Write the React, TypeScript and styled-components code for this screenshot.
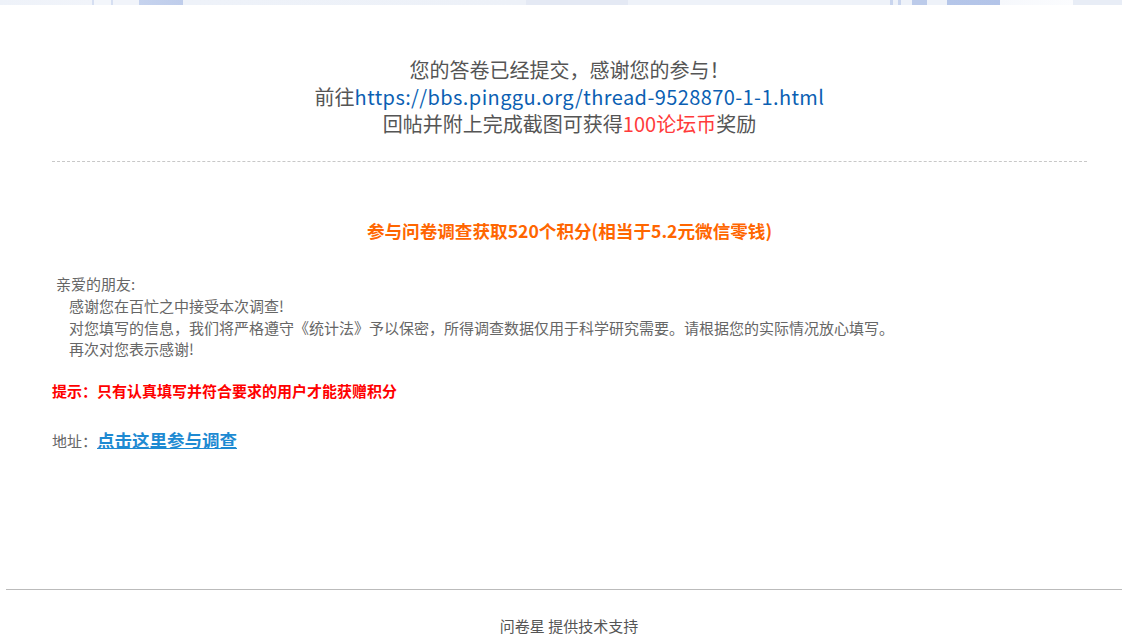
import styled, { createGlobalStyle } from "styled-components";

const GlobalStyle = createGlobalStyle`
  html, body {
    margin: 0;
    padding: 0;
    background: #fff;
  }
  body {
    font-family: "Microsoft YaHei", "Noto Sans CJK SC", "Noto Sans", sans-serif;
    color: #666;
  }
`;

const Banner = styled.div`
  height: 5px;
  background: linear-gradient(
    to right,
    #eef2f9 0px,
    #f1f4fa 92px,
    #d6dff2 92px,
    #d6dff2 94px,
    #f3f6fb 94px,
    #f3f6fb 111px,
    #d6dff2 111px,
    #d6dff2 113px,
    #f1f4fa 113px,
    #f1f4fa 139px,
    #c6d3ee 139px,
    #bfcdeb 183px,
    #eef2f9 183px,
    #edf1f8 526px,
    #e4e9f4 526px,
    #e4e9f4 628px,
    #eef2f9 628px,
    #eef2f9 890px,
    #c9d5ee 890px,
    #c9d5ee 893px,
    #eef2f9 893px,
    #eef2f9 898px,
    #c9d5ee 898px,
    #c9d5ee 901px,
    #eef2f9 901px,
    #eef2f9 912px,
    #bccbea 912px,
    #bccbea 927px,
    #eef2f9 927px,
    #eef2f9 947px,
    #b5c6e9 947px,
    #b3c4e8 1000px,
    #f6f8fc 1000px,
    #fbfcfe 1073px,
    #e8edf6 1073px,
    #e8edf6 1122px
  );
`;

const Main = styled.div`
  padding: 0 35px 0 52px;
`;

const Notice = styled.div`
  margin-top: 51px;
  text-align: center;
  font-size: 20px;
  line-height: 27px;
  color: #555;
`;

const Line = styled.div``;

const UrlLink = styled.a`
  color: #0b5fb3;
  text-decoration: none;
  letter-spacing: 0.4px;
`;

const Reward = styled.span`
  color: #ff3b3b;
`;

const Divider = styled.div`
  margin-top: 24px;
  border-top: 1px dashed #c8c8c8;
`;

const Title = styled.div`
  margin-top: 57px;
  text-align: center;
  font-size: 17.6px;
  line-height: 24px;
  font-weight: bold;
  color: #ff6600;
`;

const Letter = styled.div`
  margin-top: 30px;
  font-size: 15px;
  line-height: 21.8px;
  color: #666;
`;

const LetterLine = styled.div<{ $indent: number }>`
  padding-left: ${(p) => p.$indent}px;
`;

const Tip = styled.div`
  margin-top: 20px;
  font-size: 15px;
  line-height: 22px;
  font-weight: bold;
  color: #ff0000;
`;

const Address = styled.div`
  margin-top: 25px;
  font-size: 15px;
  line-height: 26px;
  color: #666;
`;

const SurveyLink = styled.a`
  font-size: 17.5px;
  font-weight: bold;
  color: #1e8ad2;
  text-decoration: underline;
`;

const Footer = styled.div`
  margin: 135px 0 0 6px;
  border-top: 1px solid #bbb;
  padding: 26px 0 20px 10px;
  text-align: center;
  font-size: 15px;
  line-height: 20px;
  color: #555;
`;

const letter = [
  { indent: 4, text: "亲爱的朋友:" },
  { indent: 17, text: "感谢您在百忙之中接受本次调查!" },
  {
    indent: 17,
    text: "对您填写的信息，我们将严格遵守《统计法》予以保密，所得调查数据仅用于科学研究需要。请根据您的实际情况放心填写。",
  },
  { indent: 17, text: "再次对您表示感谢!" },
];

const App = (): JSX.Element => {
  return (
    <>
      <GlobalStyle />
      <Banner />
      <Main>
        <Notice>
          <Line>您的答卷已经提交，感谢您的参与！</Line>
          <Line>
            前往
            <UrlLink href="#">https://bbs.pinggu.org/thread-9528870-1-1.html</UrlLink>
          </Line>
          <Line>
            回帖并附上完成截图可获得<Reward>100论坛币</Reward>奖励
          </Line>
        </Notice>
        <Divider />
        <Title>参与问卷调查获取520个积分(相当于5.2元微信零钱)</Title>
        <Letter>
          {letter.map((l, idx) => (
            <LetterLine $indent={l.indent} key={`l_${idx}`}>
              {l.text}
            </LetterLine>
          ))}
        </Letter>
        <Tip>提示：只有认真填写并符合要求的用户才能获赠积分</Tip>
        <Address>
          地址：<SurveyLink href="#">点击这里参与调查</SurveyLink>
        </Address>
      </Main>
      <Footer>问卷星 提供技术支持</Footer>
    </>
  );
};

export default App;
